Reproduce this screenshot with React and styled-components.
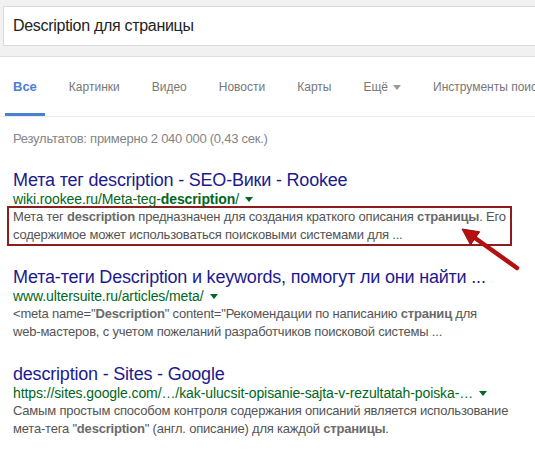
import React from 'react'
import styled, { createGlobalStyle } from 'styled-components'

const GlobalStyle = createGlobalStyle`
  body {
    margin: 0;
    background: #fff;
    font-family: "Liberation Sans", Arial, sans-serif;
    overflow: hidden;
  }
`

const Page = styled.div`
  position: relative;
  width: 535px;
  height: 451px;
  overflow: hidden;
`

const Header = styled.div`
  height: 57px;
  box-sizing: border-box;
  background: #f1f1f1;
  border-bottom: 1px solid #e0e0e0;
  padding: 6px 0 0 3px;
`

const SearchBox = styled.div`
  width: 620px;
  height: 40px;
  box-sizing: border-box;
  border: 1px solid #d9d9d9;
  background: #fff;
  display: flex;
  align-items: center;
  padding-left: 9px;
  font-size: 16px;
  letter-spacing: -0.3px;
  color: #222;
`

const Nav = styled.div`
  display: flex;
  height: 60px;
  box-sizing: border-box;
  border-bottom: 1px solid #ebebeb;
  padding-left: 5px;
  white-space: nowrap;
  overflow: hidden;
`

const Tab = styled.div`
  box-sizing: border-box;
  height: 59px;
  padding: 22px 8px 0;
  margin-right: 16px;
  font-size: ${p => (p.$active ? '13px' : '12px')};
  line-height: 16px;
  color: ${p => (p.$active ? '#4a80d4' : '#777')};
  font-weight: ${p => (p.$active ? 'bold' : 'normal')};
  border-bottom: 3px solid ${p => (p.$active ? '#4a80d4' : 'transparent')};
  display: flex;
  align-items: flex-start;
  flex-shrink: 0;
`

const Caret = styled.span`
  display: inline-block;
  margin: 6px 0 0 5px;
  border-left: 4px solid transparent;
  border-right: 4px solid transparent;
  border-top: 5px solid #999;
`

const Content = styled.div`
  padding-left: 13px;
`

const Count = styled.div`
  padding-top: 14px;
  margin-bottom: 23px;
  font-size: 13px;
  letter-spacing: -0.25px;
  line-height: 16px;
  color: #858585;
`

const Result = styled.div`
  margin-bottom: 23px;
`

const Title = styled.div`
  font-size: 18px;
  letter-spacing: -0.2px;
  line-height: 20px;
  color: #1c1a8f;
  white-space: nowrap;
`

const Url = styled.div`
  display: flex;
  align-items: center;
  font-size: 14px;
  letter-spacing: -0.1px;
  line-height: 18px;
  color: #006621;
  white-space: nowrap;
`

const UrlCaret = styled.span`
  display: inline-block;
  margin-left: 6px;
  border-left: 4px solid transparent;
  border-right: 4px solid transparent;
  border-top: 5px solid #006621;
`

const Snippet = styled.div`
  font-size: 13px;
  letter-spacing: -0.2px;
  line-height: 18px;
  color: #545454;
  white-space: nowrap;
  b { color: #6a6a6a; }
`

const Marked = styled.div`
  width: 505px;
  box-sizing: border-box;
  margin: -2px 0 -2px -6px;
  padding-left: 4px;
  border: 2px solid #8b1d1d;
`

const Arrow = styled.svg`
  position: absolute;
  left: 455px;
  top: 222px;
  width: 70px;
  height: 55px;
  pointer-events: none;
`

function App() {
  return (
    <Page>
      <GlobalStyle />
      <Header>
        <SearchBox>Description для страницы</SearchBox>
      </Header>
      <Nav>
        <Tab $active>Все</Tab>
        <Tab>Картинки</Tab>
        <Tab>Видео</Tab>
        <Tab>Новости</Tab>
        <Tab>Карты</Tab>
        <Tab>Ещё<Caret /></Tab>
        <Tab>Инструменты поиска</Tab>
      </Nav>
      <Content>
        <Count>Результатов: примерно 2 040 000 (0,43 сек.)</Count>

        <Result>
          <Title>Мета тег description - SEO-Вики - Rookee</Title>
          <Url>wiki.rookee.ru/Meta-teg-<b>description</b>/<UrlCaret /></Url>
          <Marked>
            <Snippet>
              Мета тег <b>description</b> предназначен для создания краткого описания <b>страницы</b>. Его<br />
              содержимое может использоваться поисковыми системами для ...
            </Snippet>
          </Marked>
        </Result>

        <Result>
          <Title>Мета-теги Description и keywords, помогут ли они найти ...</Title>
          <Url>www.ultersuite.ru/articles/meta/<UrlCaret /></Url>
          <Snippet>
            &lt;meta name="<b>Description</b>" content="Рекомендации по написанию <b>страниц</b> для<br />
            web-мастеров, с учетом пожеланий разработчиков поисковой системы ...
          </Snippet>
        </Result>

        <Result>
          <Title>description - Sites - Google</Title>
          <Url>https://sites.google.com/…/kak-ulucsit-opisanie-sajta-v-rezultatah-poiska-…<UrlCaret /></Url>
          <Snippet>
            Самым простым способом контроля содержания описаний является использование<br />
            мета-тега "<b>description</b>" (англ. описание) для каждой <b>страницы</b>.
          </Snippet>
        </Result>
      </Content>

      <Arrow viewBox="0 0 70 55">
        <line x1="62" y1="46" x2="20" y2="16" stroke="#b50f0f" strokeWidth="4.5" strokeLinecap="round" />
        <polygon points="7,7 24.7,9.8 15.5,22.8" fill="#b50f0f" stroke="#9a0b0b" strokeWidth="1" strokeLinejoin="round" />
      </Arrow>
    </Page>
  )
}

export default App
